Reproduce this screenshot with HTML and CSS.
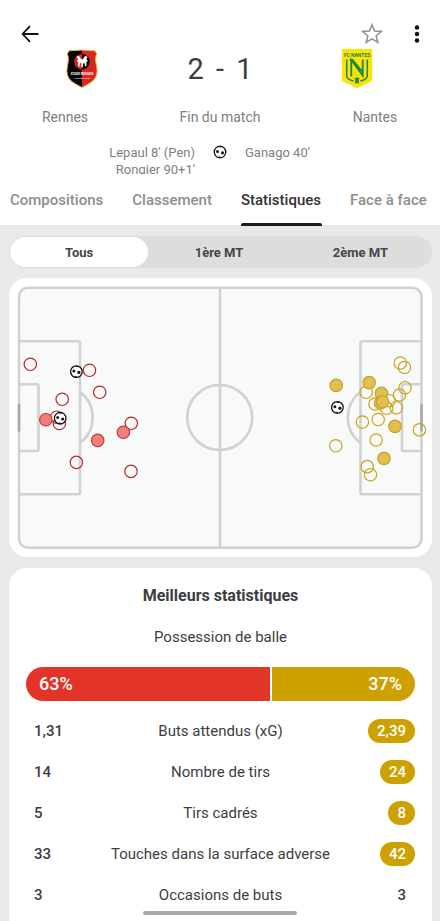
FILE: index.html
```html
<!DOCTYPE html>
<html lang="fr">
<head>
<meta charset="utf-8">
<meta name="viewport" content="width=device-width, initial-scale=1">
<title>Rennes 2 - 1 Nantes</title>
<link rel="stylesheet" href="styles.css">
</head>
<body>
<svg class="defs" aria-hidden="true">
  <symbol id="ball" viewBox="-7 -7 14 14">
    <circle r="5.800" fill="#fff" stroke="#161616" stroke-width="1.300"/>
    <circle cx="-2.500" cy="-.6" r="1.500" fill="#161616"/>
    <circle cx="2.500" cy=".8" r="1.600" fill="#161616"/>
    <path d="M-1-5.900 2.400-5.500 1.200-4.400-.2-4.500ZM4.400-4 5.900-1.400 4.700-2ZM-2.200 5.500-1.500 4.400.4 4.600.9 5.900ZM-6 .9-5 1.700-4.400 3.600-5.200 3.300Z" fill="#161616"/>
  </symbol>
</svg>
<header class="header">
  <div class="toolbar">
    <button class="icon-btn" aria-label="Retour">
      <svg width="18" height="18" viewBox="0 0 18 18" fill="none" stroke="#111" stroke-width="1.8"><path d="M9 1.2 1.6 9 9 16.8M1.6 9H17.4"/></svg>
    </button>
    <span class="spacer"></span>
    <button class="icon-btn" aria-label="Favori">
      <svg width="22" height="22" viewBox="0 0 22 22" fill="none" stroke="#919191" stroke-width="1.5"><path d="m11 1.8 2.5 6.2 6.8.5-5.2 4.4 1.7 6.6-5.8-3.6-5.8 3.6 1.700-6.600-5.200-4.400 6.800-.5Z"/></svg>
    </button>
    <button class="icon-btn more" aria-label="Plus">
      <svg width="6" height="18" viewBox="0 0 6 18" fill="#111"><circle cx="3" cy="2.500" r="2.200"/><circle cx="3" cy="9" r="2.200"/><circle cx="3" cy="15.500" r="2.200"/></svg>
    </button>
  </div>
  <div class="scoreboard">
    <svg class="crest crest-home" width="34" height="40" viewBox="0 0 34 40" role="img" aria-label="Stade Rennais">
      <path d="M4 1.800Q17 .4 30 1.800Q30.600 3.500 31.800 4.700Q29.500 9 31.600 17C34.500 31 25 34 17 38.500C9 34 -.5 31 2.400 17Q4.500 9 2.200 4.700Q3.500 3.500 4 1.800Z" fill="#d9261f"/>
      <path d="M17 1Q10 1 4 1.800Q3.500 3.500 2.200 4.700Q4.500 9 2.400 17C-.5 31 9 34 17 38.500Z" fill="#060606"/>
      <path d="M4 1.800Q17 .4 30 1.800Q30.600 3.500 31.800 4.700Q29.500 9 31.600 17C34.500 31 25 34 17 38.500C9 34 -.5 31 2.400 17Q4.500 9 2.200 4.700Q3.500 3.500 4 1.800Z" fill="none" stroke="#edb545"/>
      <path d="M17 5A7.700 7.700 0 0 0 17 20.500Z" fill="#d9261f"/><path d="M17 5A7.700 7.700 0 0 1 17 20.500Z" fill="#060606"/>
      <path d="m11.500 8 1.500-1.200 2 1.300 1 2.200h2L19 8.100l2-1.300L22.500 8l-1 2 1.300 2-1.600 1.400.5 2.800-1.600 1.300-.6-3.500-1.300.5-.5 4-1.500-.6.300-3.400-1.300-.8-.8 4.300-1.600-1.500.7-3-1.600-1.500 1.400-2.100Z" fill="#fff"/>
      <text class="crest-name" x="17" y="26" text-anchor="middle" fill="#fff">STADE RENNAIS</text>
      <text class="crest-sub" x="17" y="29.500" text-anchor="middle" fill="#fff">FOOTBALL CLUB</text>
    </svg>
    <div class="score">2 - 1</div>
    <svg class="crest crest-away" width="32" height="42" viewBox="0 0 32 42" role="img" aria-label="FC Nantes">
      <path d="M.8 1H31.200V33Q24 36 16 40.500Q8 36 .8 33Z" fill="#fbe20b"/>
      <text class="crest-title" x="16" y="8.500" text-anchor="middle" fill="#188a3b">FC NANTES</text>
      <path d="M5.700 11.500V28Q6 31.500 12.500 33M26.300 11.500V28Q26 31.500 19.500 33" fill="none" stroke="#188a3b" stroke-width="1.500"/>
      <path d="M10.300 28.500V12L21.700 27.500V11.500M8.800 12H11.500L21.700 24" fill="none" stroke="#188a3b" stroke-width="1.800"/>
      <path d="m16 28.500 1 2 2-.7-1.300 1.900L18 36l-2-1.300-2 1.300.3-4.300-1.300-1.900 2 .7Z" fill="#188a3b"/>
    </svg>
    <div class="label">Rennes</div>
    <div class="label">Fin du match</div>
    <div class="label">Nantes</div>
  </div>
  <div class="scorers">
    <div class="scorers-home">Lepaul 8' (Pen)<br>Rongier 90+1'</div>
    <svg width="14" height="14"><use href="#ball"/></svg>
    <div>Ganago 40'</div>
  </div>
  <nav class="tabs">
    <a href="#compositions">Compositions</a>
    <a href="#classement">Classement</a>
    <a class="active" href="#statistiques" aria-current="page">Statistiques</a>
    <a href="#face">Face à face</a>
  </nav>
</header>
<main class="content">
  <div class="segments">
    <button class="selected">Tous</button>
    <button>1ère MT</button>
    <button>2ème MT</button>
  </div>
  <section class="card" aria-label="Carte des tirs">
    <svg class="pitch" viewBox="9 278 423 279">
      <g fill="none" stroke="#d0d1d0" stroke-width="2.600">
        <rect x="19" y="287.700" width="402.500" height="260" rx="9" fill="#f8faf9"/>
        <path d="M220 288V547.500"/>
        <circle cx="219.700" cy="417.500" r="32.500"/>
        <path d="M19 341.200H78.500Q80 341.200 80 342.700V492.800Q80 494.300 78.500 494.300H19M19 384.200H37Q38.500 384.200 38.500 385.700V449.500Q38.500 451 37 451H19M80 392A32 32 0 0 1 80 443"/>
        <path d="M421.500 341.200H362Q360.500 341.200 360.500 342.700V492.800Q360.500 494.300 362 494.300H421.500M421.500 384.200H403.500Q402 384.200 402 385.700V449.500Q402 451 403.500 451H421.500M360.500 392A32 32 0 0 0 360.500 443"/>
      </g>
      <path d="M19 404V431.500M421.500 404V431.500" stroke="#a9a9a9" stroke-width="2.600"/>
      <g class="shots-home">
        <circle cx="30.300" cy="364.300" r="6.200"/><circle cx="89.500" cy="370.300" r="6.200"/><circle cx="99.700" cy="392.300" r="6.200"/><circle cx="62.200" cy="399.300" r="6.200"/><circle cx="131.300" cy="423.300" r="6.200"/><circle cx="76.400" cy="462.400" r="6.200"/><circle cx="131" cy="471.400" r="6.200"/><circle cx="56.700" cy="417.200" r="6.200"/><circle cx="59.400" cy="423.500" r="6.200"/>
        <circle class="on" cx="45.800" cy="419.700" r="6.200"/><circle class="on" cx="123.400" cy="432.300" r="6.200"/><circle class="on" cx="97.700" cy="440.400" r="6.200"/>
      </g>
      <g class="shots-away">
        <circle cx="366.200" cy="392.300" r="6.200"/><circle cx="375" cy="404" r="6.200"/><circle cx="389" cy="400.700" r="6.200"/><circle cx="386.700" cy="408.300" r="6.200"/><circle cx="396.300" cy="407.700" r="6.200"/><circle cx="399.500" cy="395" r="6.200"/><circle cx="405" cy="387.700" r="6.200"/><circle cx="400.300" cy="363" r="6.200"/><circle cx="404.500" cy="367.500" r="6.200"/><circle cx="362.400" cy="422" r="6.200"/><circle cx="378.200" cy="419.500" r="6.200"/><circle cx="419.400" cy="429.900" r="6.200"/><circle cx="376.200" cy="440" r="6.200"/><circle cx="335.800" cy="445.800" r="6.200"/><circle cx="367.200" cy="466.600" r="6.200"/><circle cx="370.500" cy="474.700" r="6.200"/>
        <circle class="on" cx="336.200" cy="385.400" r="6.200"/><circle class="on" cx="369.200" cy="382.600" r="6.200"/><circle class="on" cx="381.500" cy="393.400" r="6.200"/><circle class="on" cx="380.500" cy="403" r="6.200"/><circle class="on" cx="382.600" cy="401.700" r="6.200"/><circle class="on" cx="395" cy="426.400" r="6.200"/><circle class="on" cx="384" cy="458.400" r="6.200"/>
      </g>
      <use href="#ball" x="69.400" y="364.600" width="14" height="14"/>
      <use href="#ball" x="53.200" y="411.200" width="14" height="14"/>
      <use href="#ball" x="330.400" y="400.400" width="14" height="14"/>
    </svg>
  </section>
  <section class="card stats">
    <h2>Meilleurs statistiques</h2>
    <h3>Possession de balle</h3>
    <div class="possession">
      <div class="bar-home">63%</div>
      <div class="bar-away">37%</div>
    </div>
    <table>
      <tbody>
        <tr><td>1,31</td><th scope="row">Buts attendus (xG)</th><td><span class="best">2,39</span></td></tr>
        <tr><td>14</td><th scope="row">Nombre de tirs</th><td><span class="best">24</span></td></tr>
        <tr><td>5</td><th scope="row">Tirs cadrés</th><td><span class="best">8</span></td></tr>
        <tr><td>33</td><th scope="row">Touches dans la surface adverse</th><td><span class="best">42</span></td></tr>
        <tr><td>3</td><th scope="row">Occasions de buts</th><td><span class="plain">3</span></td></tr>
      </tbody>
    </table>
  </section>
</main>
<div class="home-indicator"></div>
</body>
</html>
```
FILE: styles.css
```css
* { box-sizing: border-box; }
body {
  margin: 0;
  min-height: 100vh;
  display: flex;
  flex-direction: column;
  background: #e9e9e9;
  color: #3d3d3f;
  font-family: Roboto, sans-serif;
  font-size: 15px;
}
button { margin: 0; padding: 0; border: 0; background: none; font: inherit; color: inherit; }
svg { display: block; }
.defs { position: absolute; width: 0; height: 0; }

.header { background: #fff; }
.toolbar { display: flex; align-items: center; padding: 23px 20px 0 21px; }
.icon-btn { display: grid; place-items: center; height: 22px; }
.more { margin-left: 31px; }
.spacer { flex: 1; }

.scoreboard {
  display: grid;
  grid-template-columns: 1fr 180px 1fr;
  align-items: center;
  justify-items: center;
  text-align: center;
}
.crest-home { margin-left: 34px; }
.crest-away { margin-right: 36px; }
.crest-name { font: bold 3px Roboto, sans-serif; }
.crest-sub { font: 2px Roboto, sans-serif; }
.crest-title { font: bold 5px Roboto, sans-serif; }
.score { font-size: 29px; line-height: 48px; word-spacing: 5px; }
.label { font-size: 14px; line-height: 20px; padding-top: 14px; color: #808080; }

.scorers {
  display: grid;
  grid-template-columns: 1fr 14px 1fr;
  column-gap: 18px;
  margin-top: 17px;
  height: 30px;
  overflow: hidden;
  font-size: 13px;
  line-height: 17px;
  color: #808080;
}
.scorers svg { margin-top: 1px; }
.scorers-home { text-align: right; }

.tabs { display: flex; gap: 29px; padding: 0 10px; white-space: nowrap; overflow-x: clip; }
.tabs a {
  position: relative;
  padding: 16px 0 15px;
  font-size: 15px;
  font-weight: 500;
  line-height: 20px;
  color: #8e8e8e;
  text-decoration: none;
}
.tabs .active { color: #333; }
.tabs .active::after {
  content: "";
  position: absolute;
  left: 0;
  right: -1px;
  bottom: -1px;
  height: 3px;
  border-radius: 2px 2px 0 0;
  background: #1f1c1c;
}

.content { flex: 1; display: flex; flex-direction: column; padding: 11px 8px 0 9px; }
.segments {
  display: grid;
  grid-template-columns: 138fr 141fr 141fr;
  padding: 1px;
  border-radius: 16px;
  background: #dddddd;
}
.segments button { height: 30px; border-radius: 15px; font-size: 13px; font-weight: 700; color: #454545; }
.segments .selected { background: #fff; }
.card { margin-top: 10px; border-radius: 18px; background: #fff; }
.pitch { width: 100%; height: auto; }
.shots-home, .shots-away { fill: none; stroke-width: 1.2; }
.shots-home { stroke: #bb2a2a; }
.shots-home .on { fill: #f17f7b; stroke: #cc3836; }
.shots-away { stroke: #c9a21a; }
.shots-away .on { fill: #e0bf55; }

.stats { flex: 1; margin-top: 11px; padding: 18px 17px 0; border-radius: 18px 18px 0 0; text-align: center; }
.stats h2 { margin: 0; font-size: 16px; font-weight: 700; line-height: 20px; }
.stats h3 { margin: 21px 0 20px; font-size: 15px; font-weight: 400; line-height: 20px; }
.possession {
  display: grid;
  grid-template-columns: 63fr 37fr;
  gap: 2px;
  font-size: 18px;
  font-weight: 500;
  line-height: 34px;
  color: #fff;
}
.bar-home { padding-left: 13px; border-radius: 17px 0 0 17px; background: #e23429; text-align: left; }
.bar-away { padding-right: 13px; border-radius: 0 17px 17px 0; background: #cea102; text-align: right; }
table { width: 100%; margin-top: 9px; border-collapse: collapse; table-layout: fixed; }
td, th { height: 41px; padding: 0; font-size: 15px; font-weight: 400; line-height: 24px; }
th { width: 62%; white-space: nowrap; }
td { font-weight: 500; }
td:first-child { padding-left: 8px; text-align: left; }
td:last-child { text-align: right; }
.best, .plain { display: inline-block; padding: 0 9px; border-radius: 12px; }
.best { background: #cea102; color: #fff; }
.home-indicator {
  position: fixed;
  bottom: 6px;
  left: 50%;
  width: 35%;
  height: 4px;
  border-radius: 2px;
  background: #a9a9a9;
  transform: translateX(-50%);
}
```
